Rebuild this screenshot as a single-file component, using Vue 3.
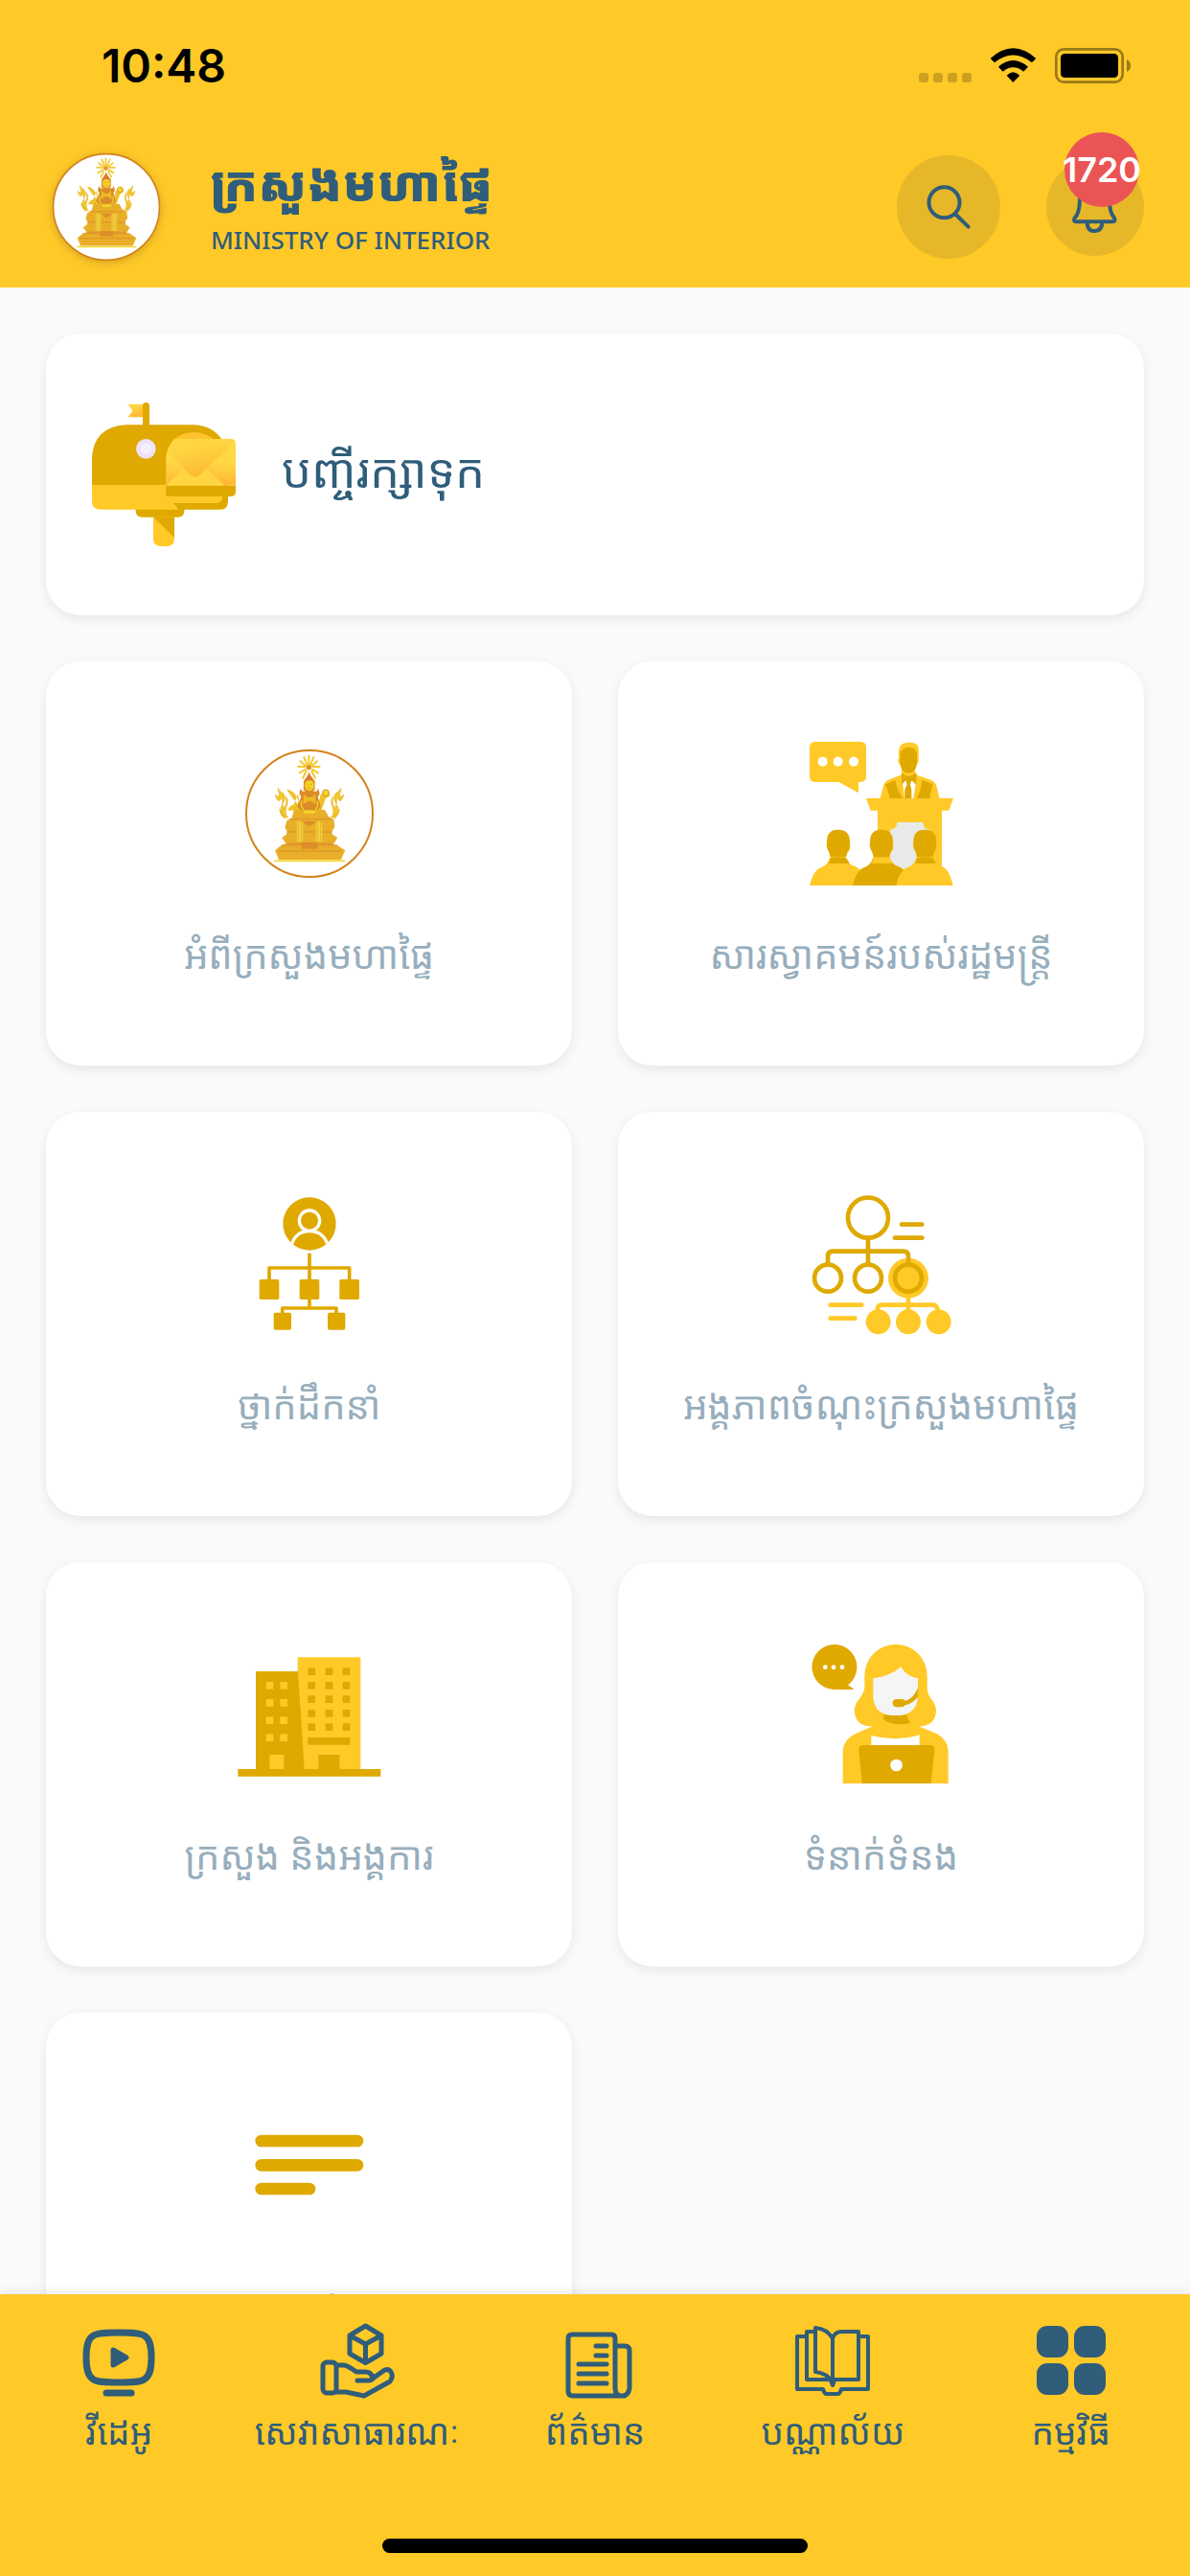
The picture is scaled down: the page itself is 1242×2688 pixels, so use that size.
<template>
  <div class="app">
    <svg class="defs" width="0" height="0" aria-hidden="true">
      <defs>
        <linearGradient id="gold" x1="0" y1="0" x2="0.4" y2="1">
          <stop offset="0.3" stop-color="#ffd642" />
          <stop offset="1" stop-color="#ffb936" />
        </linearGradient>
        <linearGradient id="paper" x1="0" y1="0" x2="0" y2="1">
          <stop offset="0.5" stop-color="#ffd844" />
          <stop offset="1" stop-color="#ffb535" />
        </linearGradient>
        <pattern id="carving" width="7" height="7" patternUnits="userSpaceOnUse">
          <rect width="7" height="7" fill="#e8ab25" />
          <path d="M0 1h3M4 5h3" stroke="#f7d62c" stroke-width="2" />
          <path d="M4 2h2M1 5h2" stroke="#d8832a" stroke-width="2" />
        </pattern>
        <symbol id="emblem" viewBox="203 71 450 450">
          <circle cx="428" cy="296" r="198" fill="#fff" stroke="#d3831b" stroke-width="6" />
          <path
            d="M426 112v30M410 117l11 27M442 117l-11 27M398 130l20 18M454 130l-20 18M390 149h26M462 149h-26M395 170l22-14M457 170l-22-14M406 187l13-26M447 187l-13-26"
            stroke="#f2ca2b"
            stroke-width="6"
          />
          <circle cx="426" cy="151" r="8" fill="#e58e2c" />
          <path d="M427 166q4 14 17 27h-34q13-13 17-27z" fill="#db7a2b" />
          <path d="M410 192h35v28l-8 10h-20l-8-10z" fill="#e2932b" />
          <ellipse cx="428" cy="208" rx="14" ry="16" fill="#f5d32a" />
          <path d="M420 205h5M431 205h5M423 216h9" stroke="#c98a20" stroke-width="2" />
          <!-- arms and what they hold -->
          <path
            d="M356 220q22 2 32 23l6 14-4 8q-18-20-34-45zM392 235l-14 34q-12 0-18 17h42zM462 238l18-18q14 4 11 21l-12 7-14 38h-12z"
            fill="#efc129"
          />
          <circle cx="479" cy="231" r="10" fill="#f6d42a" stroke="#d99527" stroke-width="3" />
          <path d="M400 217l6 9h44l6-9 4 18-6 8 10 32-16 14h-42l-16-14 12-32-6-9z" fill="#d98c27" />
          <path d="M410 234q18 24 36 0l2 34-14-10h-12l-14 10z" fill="#efb826" />
          <path d="M404 256q-6 20 6 26M452 256q6 20-6 26" stroke="#f4d42b" stroke-width="4" fill="none" />
          <!-- flames on both sides -->
          <g fill="#f1c92a" stroke="#e5b027" stroke-width="2">
            <path d="M330 216q2 10 9 12 12 4 12 20-2 12-8 18 2-14-4-20-2 10-8 10-10-8-9-20l6 8q6-4 6-10-6-8-4-18zM354 243q8 10 5 22-6 14-6 24 0 12 8 20-14-2-20-14-8-18 4-28l2 12q6-6 8-14 2-12-1-22zM334 282q4 10 12 14l6 16q-14-6-18-30z" />
            <path d="M526 216q-2 10-9 12-12 4-12 20 2 12 8 18-2-14 4-20 2 10 8 10 10-8 9-20l-6 8q-6-4-6-10 6-8 4-18zM502 243q-8 10-5 22 6 14 6 24 0 12-8 20 14-2 20-14 8-18-4-28l-2 12q-6-6-8-14-2-12 1-22zM522 282q-4 10-12 14l-6 16q14-6 18-30z" />
          </g>
          <!-- tiered throne -->
          <path
            d="M380 284h96l12 22 16 7 3 25-10 14 4 10 15 10-13 20 15 5 22 14-14 30H332l-12-30 20-16 15-5-14-18 14-10 4-10-8-12 6-22 15-7z"
            fill="url(#carving)"
          />
          <path d="M408 286h42l-8 10h-28z" fill="#f4d12b" />
          <path d="M364 313h130M355 353h146M356 390h144M340 395h178M330 413h198" stroke="#d47e2a" stroke-width="3" opacity="0.7" />
          <path d="M388 320h20v64h-20zM448 320h20v64h-20z" fill="#f3cf3a" />
          <path d="M393 320v64M403 320v64M453 320v64M463 320v64" stroke="#cf8d25" stroke-width="2" stroke-dasharray="4 3" />
          <path d="M404 320h48l-24 16zM404 386h50v20h-50z" fill="#dc8e29" />
          <path d="M318 444h222" stroke="#f4d82c" stroke-width="5" />
        </symbol>
      </defs>
    </svg>

    <header class="header">
      <div class="status">
        <span class="time">10:48</span>
        <svg class="status-icons" viewBox="345 141 675 123" aria-hidden="true">
          <g fill="#cca120">
            <rect x="351" y="225" width="30" height="30" rx="9" />
            <rect x="396" y="225" width="30" height="30" rx="9" />
            <rect x="441" y="225" width="30" height="30" rx="9" />
            <rect x="486" y="225" width="30" height="30" rx="9" />
          </g>
          <path d="M575 180Q646 116 718 180L705 193Q646 146 588 193z" />
          <path d="M600 206Q646 166 693 206L679 221Q646 195 614 221z" />
          <path d="M626 233Q646 212 667 233L646 255z" />
          <rect x="781" y="151" width="208" height="103" rx="24" fill="none" stroke="#997918" stroke-width="8" />
          <rect x="795" y="165" width="180" height="75" rx="13" />
          <path d="M1002 183q12 6 12 19.500t-12 19.500z" fill="#997918" />
        </svg>
      </div>

      <div class="brand-bar">
        <svg class="logo" aria-hidden="true"><use href="#emblem" /></svg>
        <div class="brand">
          <h1>ក្រសួងមហាផ្ទៃ</h1>
          <p>MINISTRY OF INTERIOR</p>
        </div>
        <button class="round search" type="button" aria-label="ស្វែងរក">
          <svg viewBox="288 486 324 324">
            <circle cx="436.500" cy="634" r="48" />
            <path d="M473 672l39 38" />
          </svg>
        </button>
        <button class="round bell" type="button" aria-label="ជូនដំណឹង">
          <svg viewBox="756 495 306 306">
            <path
              d="M861 620q0 48-16 62-6 12 5 12h113q12 0 6-12-16-18-16-62 0-44-46-46t-46 46zM884 695q0 28 23 28t24-28"
            />
          </svg>
          <span class="badge">{{ unread }}</span>
        </button>
      </div>
    </header>

    <main class="content">
      <a class="card saved" href="#saved">
        <svg class="icon" viewBox="168 240 450 450" aria-hidden="true">
          <path d="M281 245h47v41h-47l14-20z" fill="url(#gold)" />
          <path d="M327 320v-70q0-10 10-10t11 10v70z" fill="#dfa900" />
          <path d="M305 570h152v10q0 19-20 19H326q-21 0-21-19z" fill="#dfa900" />
          <path d="M360 598h66v68q0 24-24 24h-18q-24 0-24-24z" fill="#ffc928" />
          <path d="M360 598h66v65z" fill="#dfa900" />
          <path d="M168 500v-85q4-98 105-105h212q75 0 109 80v158q0 27-24 27H440l-40-40z" fill="#dfa900" />
          <path d="M168 498h240v57l30 20H194q-26 0-26-26z" fill="#ffc928" />
          <path d="M400 534h177q-2 21-22 21H421l17 20h-38z" fill="#ffc928" />
          <path d="M400 500v-84q6-78 87-83 36 0 66 25v140z" fill="#ffc330" />
          <path d="M400 500h218v18q0 16-16 16H400z" fill="#dfa900" />
          <path d="M400 500v-90q3-32 27-56h175q16 0 16 16v130z" fill="url(#paper)" />
          <path d="M400 500l50-50h80l53 50z" fill="#ffd642" />
          <path d="M408 395q7-26 19-41h175q8 0 13 5L507 466q-16 15-32 0z" fill="url(#gold)" />
          <circle cx="337" cy="385" r="31" fill="#eee2fa" />
          <circle cx="337" cy="385" r="17" fill="#f7effe" />
        </svg>
        <span class="saved-label">បញ្ចីរក្សាទុក</span>
      </a>

      <div class="grid">
        <a class="card tile" href="#about">
          <svg class="icon" aria-hidden="true"><use href="#emblem" /></svg>
          <span>អំពីក្រសួងមហាផ្ទៃ</span>
        </a>

        <a class="card tile" href="#welcome">
          <svg class="icon" viewBox="372 72 450 450" aria-hidden="true">
            <path d="M390 72h141q18 0 18 18v90q0 18-18 18h-6v34l-62-34h-73q-18 0-18-18V90q0-18 18-18z" fill="#ffc928" />
            <g fill="#fff">
              <circle cx="413" cy="134" r="15" />
              <circle cx="461" cy="134" r="15" />
              <circle cx="510" cy="134" r="15" />
            </g>
            <path d="M652 124q-6-40 14-47 26-6 42 3 8 8 5 44 2 16-7 20-2 12-5 18l6 14 44 15q14 6 18 18l10 41H593l10-40q2-12 16-19l41-16v-25q-4-2-5-7-7-3-6-17z" fill="#ffc928" />
            <path d="M656 108q4-17 25-18 24 0 27 17v30q-2 32-27 33-24 0-26-36z" fill="#dfa900" />
            <path d="M608 206l32-14q4 30 24 58h-41q-5-30-15-44zM758 204l-34-12q-2 30-18 58h43q2-30 9-46z" fill="#dfa900" />
            <path d="M663 196h42l-8 54h-28z" fill="#fff" />
            <path d="M660 168q22 24 46 0v38l-15-13h-18l-13 13z" fill="#dfa900" />
            <path d="M673 192h18l-4 14 4 15v29h-21v-29l7-15z" fill="#dfa900" />
            <path d="M549 249h273l-14 38h-22v200H585V287h-22z" fill="#ffc928" />
            <path d="M646 324h80q2 22 24 24v60l-40 62h-60l-26-30V348q22-4 22-24z" fill="#e8eae8" />
            <g v-for="person in audience" :key="person.x" :transform="`translate(${person.x} 0)`">
              <path d="M64 434h50q4 20 30 29 22 8 34 59H0q10-44 30-54 28-10 34-34z" :fill="person.coat" />
              <path d="M53 400q-3-4 0-8h74q3 12-5 24h-8q-3 12-1 20l10 17H56q10-8 8-20l-2-17q-9-6-9-16z" fill="#ffc928" />
              <path d="M54 385q0-38 35-38 37 0 37 38 0 22-7 33l-4 13q-24 5-50 0l-4-13q-7-12-7-33z" fill="#dfa900" />
              <path v-if="person.collar" d="M65 436q24-4 50 0l10 17H59q5-6 6-17z" fill="#dfa900" />
            </g>
          </svg>
          <span>សារស្វាគមន៍របស់រដ្ឋមន្ត្រី</span>
        </a>

        <a class="card tile" href="#leaders">
          <svg class="icon" viewBox="203 72 450 450" aria-hidden="true">
            <clipPath id="head"><circle cx="428" cy="171" r="83" /></clipPath>
            <circle cx="428" cy="171" r="83" fill="#dfa900" />
            <g clip-path="url(#head)" fill="none" stroke="#fff" stroke-width="10">
              <path d="M371 240q12-46 57-46t58 46" />
              <circle cx="428" cy="161" r="32" fill="#dfa900" />
            </g>
            <g fill="none" stroke="#dfa900" stroke-width="11" stroke-linejoin="round">
              <path d="M428 263v172M302 350v-41h251v41M343 455v-20h169v20" />
            </g>
            <g fill="#dfa900">
              <rect x="271" y="345" width="62" height="63" rx="5" />
              <rect x="397" y="345" width="62" height="63" rx="5" />
              <rect x="522" y="345" width="62" height="63" rx="5" />
              <rect x="316" y="449" width="55" height="54" rx="5" />
              <rect x="485" y="449" width="55" height="54" rx="5" />
            </g>
          </svg>
          <span>ថ្នាក់ដឹកនាំ</span>
        </a>

        <a class="card tile" href="#units">
          <svg class="icon" viewBox="433 72 450 450" aria-hidden="true">
            <circle cx="742" cy="341" r="63" fill="#ffc928" />
            <g fill="none" stroke="#dfa900" stroke-width="14" stroke-linecap="round">
              <circle cx="616" cy="152" r="63" />
              <circle cx="490" cy="341" r="42" />
              <circle cx="616" cy="341" r="42" />
              <circle cx="742" cy="341" r="42" />
              <path d="M616 216v82M490 298v-25q0-16 16-16h220q16 0 16 16v25M721 173h64M700 215h85" />
            </g>
            <g fill="none" stroke="#ffc928" stroke-width="14" stroke-linecap="round">
              <path d="M742 400v50M645 444q0-19 14-19h160q14 0 15 19M498 425h98M498 467h77" />
            </g>
            <g fill="#ffc928">
              <circle cx="648" cy="478" r="39" />
              <circle cx="742" cy="478" r="39" />
              <circle cx="837" cy="478" r="39" />
            </g>
          </svg>
          <span>អង្គភាពចំណុះក្រសួងមហាផ្ទៃ</span>
        </a>

        <a class="card tile" href="#ministries">
          <svg class="icon" viewBox="203 72 450 450" aria-hidden="true">
            <path d="M391 118h197v352H391z" fill="#ffc928" />
            <path d="M260 162h132l20 308H260z" fill="#dfa900" />
            <path d="M204 468h447v23H204z" fill="#dfa900" />
            <path d="M303 423h45v45h-45z" fill="#ffc928" />
            <path d="M456 423h66v46h-66zM423 369h132v23H423z" fill="#dfa900" />
            <g fill="#ffc928">
              <template v-for="y in [195, 249, 304, 358]" :key="y">
                <rect v-for="x in [292, 336]" :key="x" :x="x" :y="y" width="23" height="23" />
              </template>
            </g>
            <g fill="#dfa900">
              <template v-for="y in [151, 195, 238, 282, 325]" :key="y">
                <rect v-for="x in [423, 478, 532]" :key="x" :x="x" :y="y" width="23" height="23" />
              </template>
            </g>
          </svg>
          <span>ក្រសួង និងអង្គការ</span>
        </a>

        <a class="card tile" href="#contact">
          <svg class="icon" viewBox="253 72 450 450" aria-hidden="true">
            <path d="M328 219a70.500 70.500 0 1 1 45-14l17 11v3z" fill="#dfa900" />
            <g fill="#fff">
              <circle cx="302" cy="149" r="7" />
              <circle cx="328" cy="149" r="7" />
              <circle cx="355" cy="149" r="7" />
            </g>
            <path
              d="M425 176a97 98 0 0 1 196 0v36q0 24 18 44 10 14 10 32-4 42-46 46h-9l58 24q34 20 35 52v103H357V410q2-36 42-54l52-22h-13q-40-4-45-46 0-18 10-32 20-24 22-42z"
              fill="#ffc928"
            />
            <path d="M446 363q76 20 151-2v40H446z" fill="#fff" />
            <path d="M486 292h71q0 18 12 31-40 10-72-2l-13-10z" fill="#dfa900" />
            <path d="M452 184q52-6 87-36 16 30 53 36v60q-4 50-55 56h-30q-50-4-55-56z" fill="#f5f5f5" />
            <path d="M592 214v28q-16 20-40 26-4 6-10 6h-17q-12-2-12-13t12-12h17q7 0 12 5 24-6 38-40z" fill="#dfa900" />
            <path d="M420 393h210q14 0 14 14l-11 106H417L407 407q0-14 13-14z" fill="#dfa900" />
            <circle cx="524.500" cy="456" r="19" fill="#fff" />
          </svg>
          <span>ទំនាក់ទំនង</span>
        </a>

        <a class="card tile" href="#more">
          <svg class="icon" viewBox="203 13 450 450" aria-hidden="true">
            <path d="M277 163h301M277 239h301M277 313h151" stroke="#dfa900" stroke-width="38" stroke-linecap="round" />
          </svg>
          <span>កម្រង</span>
        </a>
      </div>
    </main>

    <nav class="nav">
      <div class="tabs">
        <button class="tab" type="button">
          <svg class="line" viewBox="0 0 84 84" aria-hidden="true">
            <path d="M42 13c26 0 34 0 34 26S68 65 42 65 8 65 8 39s8-26 34-26z" stroke-width="7" />
            <path d="M36 31v16l14-8z" fill="#2f5d7a" />
            <path d="M29 76h26" stroke-width="7" />
          </svg>
          <span>វីដេអូ</span>
        </button>
        <button class="tab" type="button">
          <svg class="line" viewBox="0 0 84 84" aria-hidden="true">
            <path d="M50.500 6l16.500 10v19L50.500 44.500 34 35V16zM34 16l16.500 9L67 16M50.500 25v19" />
            <rect x="6" y="44" width="14" height="32" rx="4" />
            <path
              d="M20 47h8q3 0 13 7h9q7 0 8 7l11-8q5-3 8 1 3 5-1 10L49 79l-19-4H20M42 63h12q4 0 4-5"
            />
          </svg>
          <span>សេវាសាធារណៈ</span>
        </button>
        <button class="tab" type="button">
          <svg class="line" viewBox="0 0 84 84" aria-hidden="true">
            <path d="M73 79H19q-5 0-5-5V19q0-4 4-4h41q4 0 4 4v52q0 8 7 8t8-8V32q0-5-5-5H63" stroke-width="5" />
            <path d="M43 27h11M43 37h11M25 46h29M25 56h29M25 66h29" stroke-width="5" />
          </svg>
          <span>ព័ត៌មាន</span>
        </button>
        <button class="tab" type="button">
          <svg class="line book" viewBox="0 0 84 84" aria-hidden="true">
            <path d="M14 17H5v55h27q1 5 4 5h11q3 0 4-5h28V17h-9" />
            <path d="M23 12h-8v50h54V12H52q-8 0-10 7" />
            <path d="M24 8q12 1 18 11v46q-6-10-18-11z" />
            <path d="M40 63h4l-2 5z" />
          </svg>
          <span>បណ្ណាល័យ</span>
        </button>
        <button class="tab" type="button">
          <svg viewBox="0 0 84 84" fill="#2f5d7a" aria-hidden="true">
            <rect x="6" y="6" width="33" height="33" rx="11" />
            <rect x="45" y="6" width="33" height="33" rx="11" />
            <rect x="6" y="45" width="33" height="33" rx="11" />
            <rect x="45" y="45" width="33" height="33" rx="11" />
          </svg>
          <span>កម្មវិធី</span>
        </button>
      </div>
      <div class="home-bar"></div>
    </nav>
  </div>
</template>

<script setup>
import { ref } from 'vue';

const unread = ref(1720);

// the three listeners in front of the podium
const audience = [
  { x: 372, coat: '#ffc928', collar: true },
  { x: 507, coat: '#dfa900', collar: false },
  { x: 643, coat: '#ffc928', collar: true },
];
</script>

<style>
body {
  background: #fafafa;
}
</style>

<style scoped>
.app {
  display: flex;
  flex-direction: column;
  height: 100vh;
  overflow: hidden;
  font-family: "Noto Sans Khmer", "Noto Sans", sans-serif;
  color: #2f5d7a;
}

.defs {
  position: absolute;
}

button {
  padding: 0;
  border: none;
  background: none;
  color: inherit;
  font-family: inherit;
  cursor: pointer;
}

.header {
  flex: none;
  background: #ffc928;
}

.status {
  display: flex;
  align-items: center;
  justify-content: space-between;
  box-sizing: border-box;
  height: 132px;
  padding: 4px 60px 0 106px;
}

.time {
  font-family: Inter, sans-serif;
  font-size: 48px;
  font-weight: 600;
  color: #000;
}

.status-icons {
  width: 225px;
  height: 41px;
}

.brand-bar {
  display: flex;
  align-items: center;
  height: 168px;
  padding: 0 48px;
}

.logo {
  width: 126px;
  height: 126px;
  filter: drop-shadow(0 2px 4px #0000002e);
}

.brand {
  flex: 1;
  margin-left: 46px;
}

.brand h1 {
  margin: 0;
  font-size: 51px;
  font-weight: 900;
  line-height: 68px;
}

.brand p {
  margin: 0;
  font-family: "Noto Sans", sans-serif;
  font-size: 26px;
  font-weight: 500;
  line-height: 52px;
}

.round {
  position: relative;
  border-radius: 50%;
  background: #e6b829;
}

.round svg {
  display: block;
  width: 100%;
  height: 100%;
  fill: none;
  stroke: #2f5d7a;
  stroke-width: 12;
  stroke-linecap: round;
}

.search {
  width: 108px;
  height: 108px;
  margin-right: 48px;
}

.bell {
  width: 102px;
  height: 102px;
}

.badge {
  position: absolute;
  top: -27px;
  right: 5px;
  display: flex;
  align-items: center;
  justify-content: center;
  width: 78px;
  height: 78px;
  border-radius: 50%;
  background: #eb5455;
  color: #fff;
  font-family: Inter, sans-serif;
  font-size: 36px;
  font-weight: 600;
}

.content {
  flex: 1;
  min-height: 0;
  overflow: hidden;
  padding: 48px;
}

.card {
  display: flex;
  align-items: center;
  border-radius: 36px;
  background: #fff;
  box-shadow: 0 4px 12px #00000014;
  color: inherit;
  text-decoration: none;
}

.icon {
  flex: none;
  width: 150px;
  height: 150px;
}

.saved {
  height: 294px;
  box-sizing: border-box;
  padding: 0 48px;
  gap: 48px;
}

.saved-label {
  padding-bottom: 10px;
  font-size: 49px;
}

.grid {
  display: grid;
  grid-template-columns: 1fr 1fr;
  gap: 48px;
  margin-top: 48px;
}

.tile {
  flex-direction: column;
  box-sizing: border-box;
  height: 422px;
  padding-top: 84px;
  gap: 36px;
  color: #97aebd;
  font-size: 40px;
  line-height: 72px;
  white-space: nowrap;
}

.nav {
  flex: none;
  display: flex;
  flex-direction: column;
  align-items: center;
  justify-content: space-between;
  box-sizing: border-box;
  height: 294px;
  padding: 27px 0 24px;
  background: #ffc928;
  box-shadow: 0 0 12px #0000001f;
  z-index: 1;
}

.tabs {
  display: flex;
  width: 100%;
}

.tab {
  flex: 1;
  display: flex;
  flex-direction: column;
  align-items: center;
  font-size: 37px;
  line-height: 64px;
  white-space: nowrap;
}

.tab svg {
  width: 84px;
  height: 84px;
}

.line {
  fill: none;
  stroke: #2f5d7a;
  stroke-width: 5;
  stroke-linecap: round;
  stroke-linejoin: round;
}

.book {
  stroke-width: 4;
}

.home-bar {
  width: 444px;
  height: 15px;
  border-radius: 8px;
  background: #000;
}
</style>
